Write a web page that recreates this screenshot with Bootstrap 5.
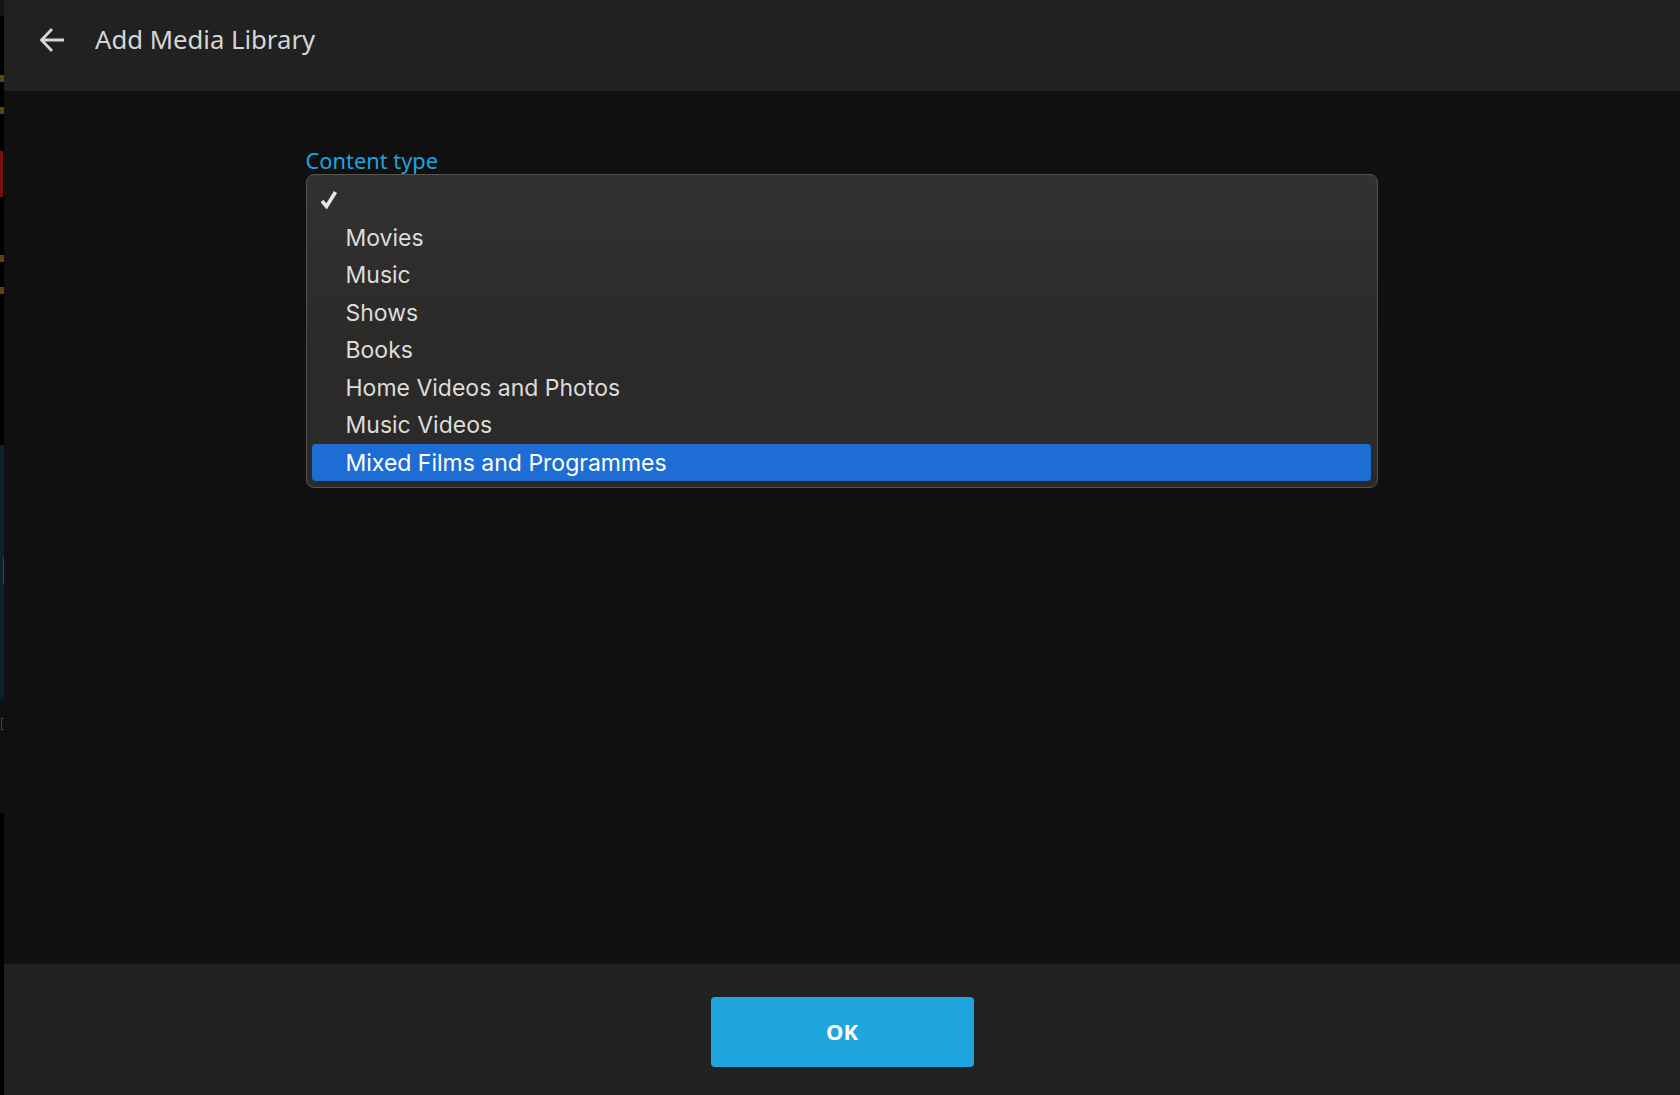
<!DOCTYPE html>
<html lang="en">
<head>
    <meta charset="UTF-8">
    <meta name="viewport" content="width=device-width, initial-scale=1.0">
    <title>Add Media Library</title>
    <link href="https://cdn.jsdelivr.net/npm/bootstrap@5.3.0/dist/css/bootstrap.min.css" rel="stylesheet">
    <style>
        html, body { height: 100%; }
        body { background: #101010; font-family: "Noto Sans", sans-serif; overflow: hidden; }

        /* sliver of the page underneath the dialog */
        .under { width: 4px; background: #000; }
        .under i { display: block; flex-shrink: 0; }
        .under .top { height: 16px; background: #141414; }
        .under .gap-a { height: 59px; }
        .under .gap-b { height: 25px; }
        .under .gap-c { height: 37px; }
        .under .gap-d { height: 58px; }
        .under .gap-e { height: 25px; }
        .under .gap-f { height: 151px; }
        .under .amber { height: 7px; background: #5c4313; }
        .under .red { height: 46px; width: 3px; background: #7c0c10; }
        .under .teal { height: 254px; background: #0d2229; padding-top: 112px; }
        .under .arc { height: 28px; width: 1px; margin-left: 3px; background: #3c474a; }
        .under .grey { height: 114px; background: #101010; padding-top: 19px; }
        .under .letter { height: 12px; border: 1px solid #444; border-right: 0; margin-left: 1px; }

        .dlg-head { height: 91px; background: #212121; padding: 0 0 11px 35px; }
        .dlg-head svg { width: 26px; height: 26px; margin-right: 30px; }
        .dlg-head h1 { font-size: 25.7px; font-weight: 400; color: #d6d6d6; margin: 0; }

        main { padding-right: 1px; }
        .dlg-body { width: 1072px; padding-top: 58px; }
        .field-label { font-size: 21.85px; line-height: 23px; margin-bottom: 2px; color: #1ea5dd; }

        .type-menu { --bs-dropdown-padding-y: 0; font-family: Inter, sans-serif; width: 100%; padding: 6px 6px 6px 5.5px;
            background: linear-gradient(180deg, #323131, #2c2a29 55%); border: 1.5px solid #555250; border-radius: 8px; }
        .type-menu .dropdown-item { height: 37.5px; padding: 1.5px 0 0 33.5px; display: flex; align-items: center;
            font-size: 23px; font-weight: 440; color: #dcdcdc; border-radius: 4px; }
        .type-menu .dropdown-item.active { background: #1e6dd5; color: #fff; }
        .type-menu .dropdown-item svg { width: 18px; height: 19px; margin: -1.5px 0 0 -26px; }

        .dlg-foot { height: 131px; background: #212121; padding-top: 33px; }
        .btn-ok { width: 263px; height: 70px; padding-bottom: 8px; background: #1fa5dd; border: 0; border-radius: 4px;
            color: #fff; font-size: 22px; font-weight: 700; }
    </style>
</head>
<body>
    <div class="d-flex h-100">
        <div class="under d-flex flex-column flex-shrink-0">
            <i class="top"></i>
            <i class="gap-a"></i>
            <i class="amber"></i>
            <i class="gap-b"></i>
            <i class="amber"></i>
            <i class="gap-c"></i>
            <i class="red"></i>
            <i class="gap-d"></i>
            <i class="amber"></i>
            <i class="gap-e"></i>
            <i class="amber"></i>
            <i class="gap-f"></i>
            <i class="teal"><i class="arc"></i></i>
            <i class="grey"><i class="letter"></i></i>
        </div>

        <div class="d-flex flex-column flex-grow-1">
            <header class="dlg-head d-flex align-items-center flex-shrink-0">
                <svg viewBox="0 0 26 26" fill="none" stroke="#d6d6d6" stroke-width="2.8"><path d="M25 13H3M13 2 2.5 13 13 24"/></svg>
                <h1>Add Media Library</h1>
            </header>

            <main class="flex-grow-1">
                <div class="dlg-body mx-auto">
                    <label class="field-label d-block">Content type</label>
                    <div class="dropdown-menu show position-static d-block type-menu">
                        <a class="dropdown-item" href="#"><svg viewBox="0 0 18 19" fill="none" stroke="#e6e6e6" stroke-width="3.6"><path d="M2 11 6.5 16.5 15.5 2"/></svg></a>
                        <a class="dropdown-item" href="#">Movies</a>
                        <a class="dropdown-item" href="#">Music</a>
                        <a class="dropdown-item" href="#">Shows</a>
                        <a class="dropdown-item" href="#">Books</a>
                        <a class="dropdown-item" href="#">Home Videos and Photos</a>
                        <a class="dropdown-item" href="#">Music Videos</a>
                        <a class="dropdown-item active" href="#">Mixed Films and Programmes</a>
                    </div>
                </div>
            </main>

            <footer class="dlg-foot d-flex align-items-start justify-content-center flex-shrink-0">
                <button type="button" class="btn btn-ok">OK</button>
            </footer>
        </div>
    </div>

    <script src="https://cdn.jsdelivr.net/npm/bootstrap@5.3.0/dist/js/bootstrap.bundle.min.js"></script>
</body>
</html>
